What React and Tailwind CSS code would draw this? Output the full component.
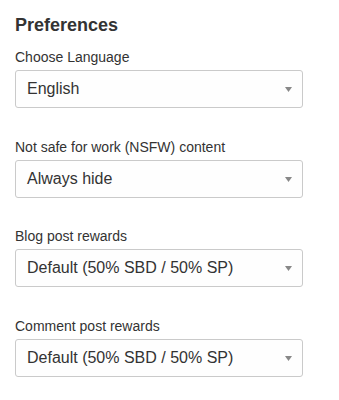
import React from 'react';

const fields = [
  { label: 'Choose Language', value: 'English', gap: 'mb-[29px]' },
  { label: 'Not safe for work (NSFW) content', value: 'Always hide', gap: 'mb-[28px]' },
  { label: 'Blog post rewards', value: 'Default (50% SBD / 50% SP)', gap: 'mb-[29px]' },
  { label: 'Comment post rewards', value: 'Default (50% SBD / 50% SP)', gap: 'mb-0' },
];

const SelectBox = ({ value }) => (
  <div className="h-[38px] w-[288px] flex items-center justify-between pl-[11px] pr-[10px] border border-[#cacaca] rounded-[3px] bg-[#fefefe] text-[16px] text-[#333]">
    <span>{value}</span>
    <svg width="7" height="5" viewBox="0 0 7 5">
      <path d="M0 0 L7 0 L3.5 5 Z" fill="#888" />
    </svg>
  </div>
);

export default function App() {
  return (
    <div
      className="w-[339px] h-[400px] bg-white pl-[15px] pt-[13px]"
      style={{ fontFamily: '"Liberation Sans", Arial, sans-serif' }}
    >
      <h2 className="text-[18px] leading-[24px] font-bold text-[#333] mb-[10px]">Preferences</h2>
      {fields.map((f) => (
        <div key={f.label} className={f.gap}>
          <div className="text-[14px] leading-[20px] text-[#333] mb-[3px]">{f.label}</div>
          <SelectBox value={f.value} />
        </div>
      ))}
    </div>
  );
}
